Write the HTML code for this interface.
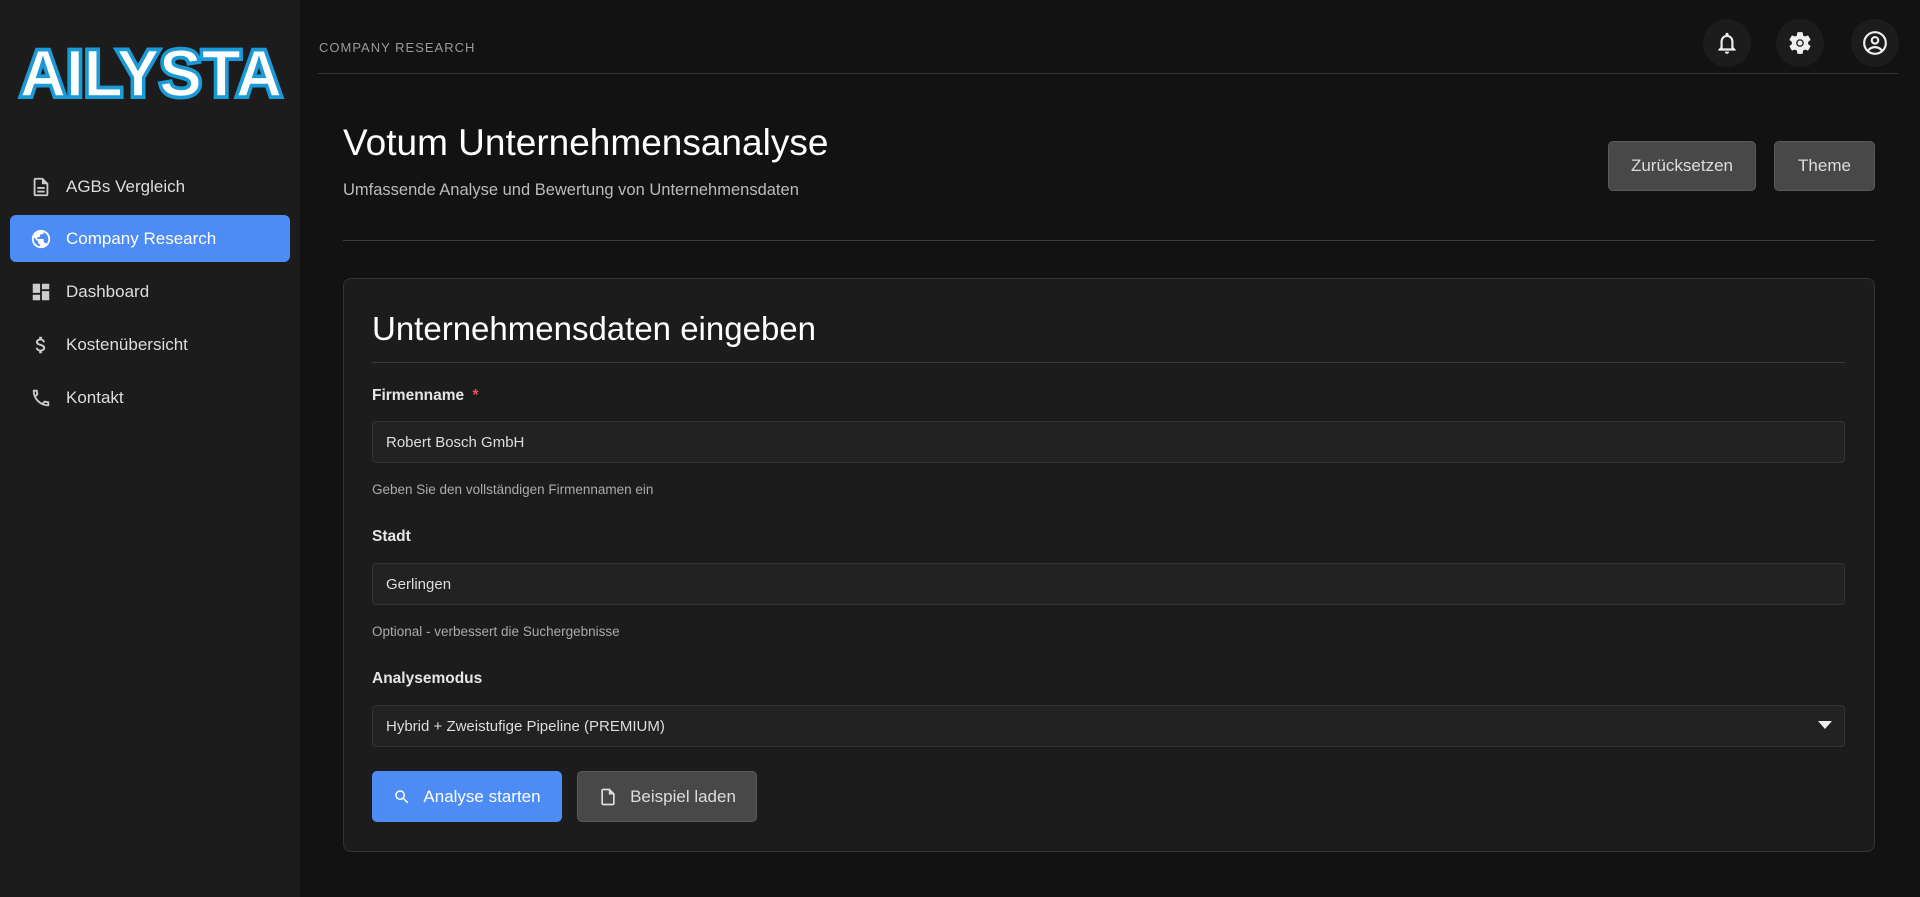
<!DOCTYPE html>
<html><head><meta charset="utf-8"><style>
*{box-sizing:border-box;margin:0;padding:0}
body{width:1920px;height:897px;background:#121212;font-family:"Liberation Sans",sans-serif;color:#fff;position:relative;overflow:hidden}
.side{position:absolute;left:0;top:0;width:300px;height:897px;background:#1c1c1c}
.nav{position:absolute;left:10px;width:280px;height:47px;border-radius:6px;display:flex;align-items:center;padding-left:20px;font-size:17px;color:#ddd}
.nav svg{width:22px;height:22px;margin-right:14px;fill:#ccc}
.nav.act{background:#4d8bf5;color:#fff}
.nav.act svg{fill:#fff}
.abs{position:absolute}
.circ{position:absolute;top:19px;width:48px;height:48px;border-radius:50%;background:#1c1c1c;display:flex;align-items:center;justify-content:center}
.btn{position:absolute;background:#484848;border:1px solid #5a5a5a;border-radius:5px;color:#ddd;font-size:17px;display:flex;align-items:center;justify-content:center}
.lbl{position:absolute;left:372px;font-size:15.5px;font-weight:bold;color:#e6e6e6}
.inp{position:absolute;left:372px;width:1473px;height:42px;background:#222;border:1px solid #333;border-radius:4px;font-size:15px;color:#ddd;padding-left:13px;display:flex;align-items:center}
.help{position:absolute;left:372px;font-size:13.5px;color:#aaa}
</style></head><body>
<div class="side">
<svg class="abs" style="left:16px;top:40px" width="270" height="62" viewBox="0 0 270 62">
<text x="135" y="56" text-anchor="middle" font-family="Liberation Sans" font-weight="bold" font-size="66" fill="#fff" stroke="#1a9ad6" stroke-width="6" paint-order="stroke" textLength="262" lengthAdjust="spacingAndGlyphs">AILYSTA</text>
<text x="135" y="56" text-anchor="middle" font-family="Liberation Sans" font-weight="bold" font-size="66" fill="none" stroke="#1a9ad6" stroke-width="1.5" textLength="262" lengthAdjust="spacingAndGlyphs">AILYSTA</text>
</svg>
<div class="nav" style="top:163px"><svg viewBox="0 0 24 24"><path d="M14 2H6c-1.1 0-2 .9-2 2v16c0 1.1.9 2 2 2h12c1.1 0 2-.9 2-2V8l-6-6zm4 18H6V4h7v5h5v11zM8 12h8v2H8zm0 4h8v2H8z"/></svg>AGBs Vergleich</div>
<div class="nav act" style="top:215px"><svg viewBox="0 0 24 24"><path d="M12 2C6.48 2 2 6.48 2 12s4.48 10 10 10 10-4.48 10-10S17.52 2 12 2zm-1 17.930c-3.95-.49-7-3.85-7-7.93 0-.62.08-1.21.21-1.79L9 15v1c0 1.1.9 2 2 2v1.93zm6.9-2.54c-.26-.81-1-1.39-1.9-1.39h-1v-3c0-.55-.45-1-1-1H8v-2h2c.55 0 1-.45 1-1V7h2c1.1 0 2-.9 2-2v-.41c2.93 1.19 5 4.06 5 7.41 0 2.08-.8 3.970-2.1 5.39z"/></svg>Company Research</div>
<div class="nav" style="top:268px"><svg viewBox="0 0 24 24"><path d="M3 13h8V3H3v10zm0 8h8v-6H3v6zm10 0h8V11h-8v10zm0-18v6h8V3h-8z"/></svg>Dashboard</div>
<div class="nav" style="top:321px"><svg viewBox="0 0 24 24"><path d="M11.8 10.9c-2.27-.59-3-1.2-3-2.15 0-1.09 1.01-1.85 2.7-1.85 1.78 0 2.44.85 2.5 2.1h2.21c-.07-1.72-1.12-3.3-3.21-3.81V3h-3v2.16c-1.94.42-3.5 1.68-3.5 3.61 0 2.31 1.91 3.46 4.7 4.13 2.5.6 3 1.48 3 2.41 0 .69-.49 1.79-2.7 1.79-2.060 0-2.87-.92-2.98-2.1h-2.2c.12 2.19 1.76 3.42 3.68 3.830V21h3v-2.15c1.95-.37 3.5-1.5 3.5-3.55 0-2.84-2.43-3.81-4.7-4.4z"/></svg>Kostenübersicht</div>
<div class="nav" style="top:374px"><svg viewBox="0 0 24 24"><path d="M6.54 5c.06.89.21 1.76.45 2.59l-1.2 1.2c-.41-1.2-.67-2.47-.76-3.79h1.51m9.86 12.02c.85.24 1.72.39 2.6.45v1.49c-1.32-.09-2.59-.35-3.8-.75l1.2-1.19M7.5 3H4c-.55 0-1 .45-1 1 0 9.39 7.61 17 17 17 .55 0 1-.45 1-1v-3.49c0-.55-.45-1-1-1-1.24 0-2.45-.2-3.57-.57-.1-.04-.21-.05-.31-.05-.26 0-.51.1-.71.29l-2.2 2.2c-2.83-1.45-5.15-3.76-6.59-6.59l2.2-2.2c.28-.28.36-.67.25-1.02C8.7 6.45 8.5 5.25 8.5 4c0-.55-.45-1-1-1z"/></svg>Kontakt</div>
</div>

<div class="abs" style="left:319px;top:40px;font-size:13px;letter-spacing:1px;color:#999">COMPANY RESEARCH</div>
<div class="abs" style="left:318px;top:73px;width:1580px;height:1px;background:#333"></div>
<div class="circ" style="left:1703px"><svg width="26" height="26" viewBox="0 0 24 24" fill="#eee"><path d="M12 22c1.1 0 2-.9 2-2h-4c0 1.1.9 2 2 2zm6-6v-5c0-3.07-1.63-5.64-4.5-6.32V4c0-.83-.67-1.5-1.5-1.5s-1.5.67-1.5 1.5v.68C7.64 5.36 6 7.92 6 11v5l-2 2v1h16v-1l-2-2zm-2 1H8v-6c0-2.48 1.51-4.5 4-4.5s4 2.02 4 4.5v6z"/></svg></div>
<div class="circ" style="left:1776px"><svg width="26" height="26" viewBox="0 0 24 24" fill="#eee"><path d="M19.43 12.98c.04-.32.07-.64.07-.98s-.03-.66-.07-.98l2.11-1.65c.19-.15.24-.42.12-.64l-2-3.46c-.12-.22-.39-.3-.61-.22l-2.49 1c-.52-.4-1.08-.73-1.69-.98l-.38-2.65C14.46 2.18 14.25 2 14 2h-4c-.25 0-.46.18-.49.42l-.38 2.65c-.61.25-1.17.59-1.69.98l-2.49-1c-.23-.09-.49 0-.61.22l-2 3.46c-.13.22-.07.49.12.64l2.11 1.65c-.04.32-.07.65-.07.98s.03.66.07.98l-2.11 1.65c-.19.15-.24.42-.12.64l2 3.46c.12.22.39.3.61.22l2.49-1c.52.4 1.08.73 1.69.98l.38 2.650c.03.24.24.42.49.42h4c.25 0 .46-.18.49-.42l.38-2.65c.61-.25 1.17-.59 1.69-.98l2.49 1c.23.09.49 0 .61-.22l2-3.46c.12-.22.07-.49-.12-.64l-2.11-1.65zM12 8.5c1.93 0 3.5 1.57 3.5 3.5s-1.57 3.5-3.5 3.5-3.5-1.57-3.5-3.5 1.57-3.5 3.5-3.5z" fill-rule="evenodd"/><circle cx="12" cy="12" r="2.3"/></svg></div>
<div class="circ" style="left:1851px"><svg width="26" height="26" viewBox="0 0 24 24" fill="none" stroke="#eee" stroke-width="2"><circle cx="12" cy="12" r="10"/><circle cx="12" cy="9.5" r="3"/><path d="M5.5 19c2-2.5 4-3.2 6.5-3.2s4.5.7 6.5 3.2"/></svg></div>

<div class="abs" style="left:343px;top:122px;font-size:37px;font-weight:500">Votum Unternehmensanalyse</div>
<div class="abs" style="left:343px;top:181px;font-size:16.5px;color:#bbb">Umfassende Analyse und Bewertung von Unternehmensdaten</div>
<div class="btn" style="left:1608px;top:141px;width:148px;height:50px">Zurücksetzen</div>
<div class="btn" style="left:1774px;top:141px;width:101px;height:50px">Theme</div>
<div class="abs" style="left:343px;top:240px;width:1532px;height:1px;background:#3a3a3a"></div>

<div class="abs" style="left:343px;top:278px;width:1532px;height:574px;background:#1c1c1c;border:1px solid #333;border-radius:8px"></div>
<div class="abs" style="left:372px;top:310px;font-size:33px;font-weight:500">Unternehmensdaten eingeben</div>
<div class="abs" style="left:372px;top:362px;width:1473px;height:1px;background:#3a3a3a"></div>
<div class="lbl" style="top:387px">Firmenname <span style="color:#f05050;margin-left:4px">*</span></div>
<div class="inp" style="top:421px">Robert Bosch GmbH</div>
<div class="help" style="top:482px">Geben Sie den vollständigen Firmennamen ein</div>
<div class="lbl" style="top:528px">Stadt</div>
<div class="inp" style="top:563px">Gerlingen</div>
<div class="help" style="top:624px">Optional - verbessert die Suchergebnisse</div>
<div class="lbl" style="top:670px">Analysemodus</div>
<div class="inp" style="top:705px">Hybrid + Zweistufige Pipeline (PREMIUM)<svg class="abs" style="right:12px;top:15px" width="14" height="8" viewBox="0 0 14 8"><path d="M0 0h14L7 8z" fill="#eee"/></svg></div>
<div class="btn" style="left:372px;top:771px;width:190px;height:51px;background:#4d8bf5;border-color:#4d8bf5;color:#fff"><svg width="18" height="18" viewBox="0 0 24 24" fill="#fff" style="margin-right:12px"><path d="M15.5 14h-.79l-.28-.27C15.41 12.59 16 11.11 16 9.5 16 5.91 13.09 3 9.5 3S3 5.91 3 9.5 5.91 16 9.5 16c1.61 0 3.09-.59 4.23-1.57l.27.28v.79l5 4.99L20.49 19l-4.99-5zm-6 0C7.01 14 5 11.99 5 9.5S7.01 5 9.5 5 14 7.01 14 9.5 11.99 14 9.5 14z"/></svg>Analyse starten</div>
<div class="btn" style="left:577px;top:771px;width:180px;height:51px"><svg width="20" height="20" viewBox="0 0 24 24" fill="#ddd" style="margin-right:12px"><path d="M14 2H6c-1.1 0-2 .9-2 2v16c0 1.1.9 2 2 2h12c1.1 0 2-.9 2-2V8l-6-6zm4 18H6V4h7v5h5v11z"/></svg>Beispiel laden</div>
</body></html>
